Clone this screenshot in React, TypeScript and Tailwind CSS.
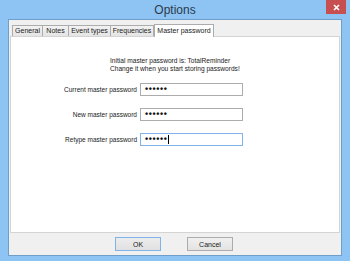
export default function App() {
  const rows = [
    { label: "Current master password", value: "••••••", focused: false },
    { label: "New master password", value: "••••••", focused: false },
    { label: "Retype master password", value: "••••••", focused: true },
  ];
  const tabs = [
    { name: "General", w: "w-[31px]" },
    { name: "Notes", w: "w-[27px]" },
    { name: "Event types", w: "w-[43px]" },
    { name: "Frequencies", w: "w-[44px]" },
  ];

  return (
    <div
      className="w-[350px] h-[261px] bg-[#8dc4f4] flex flex-col px-[8px] pb-[5px] overflow-hidden"
      style={{ fontFamily: '"Liberation Sans", Arial, sans-serif' }}
    >
      {/* Title bar */}
      <div className="h-[19px] relative flex items-center justify-center">
        <span className="text-[12px] text-[#2d3a4a] leading-none">Options</span>
        <button className="absolute right-[-4px] top-0 w-[20px] h-[14px] bg-[#c74f4f] flex items-center justify-center">
          <svg width="7" height="7" viewBox="0 0 7 7">
            <path d="M1 1L6 6M6 1L1 6" stroke="white" strokeWidth="1.6" />
          </svg>
        </button>
      </div>

      {/* Client area */}
      <div className="flex-1 bg-[#f0f0f0] border border-[#6f9fc9] flex flex-col px-[1px] pt-[3px]">
        {/* Tabs */}
        <div className="flex items-end px-[2px] h-[13px] relative z-10">
          {tabs.map((t) => (
            <div
              key={t.name}
              className={
                t.w +
                " h-[11px] border border-[#acacac] border-b-0 -mr-px bg-gradient-to-b from-[#f2f2f2] to-[#e5e5e5] text-[7px] leading-[10px] text-center text-[#1a1a1a] whitespace-nowrap"
              }
            >
              {t.name}
            </div>
          ))}
          <div className="w-[60px] h-[13px] border border-[#acacac] border-b-0 bg-white text-[7px] leading-[11px] text-center text-[#1a1a1a] -mb-px ml-[1px] whitespace-nowrap">
            Master password
          </div>
        </div>

        {/* Panel */}
        <div className="h-[197px] bg-white border border-[#d4d4d4] flex flex-col pt-[20px]">
          <div className="ml-[99px] text-[6.6px] leading-[8px] text-[#1a1a1a]">
            <div>Initial master password is: TotalReminder</div>
            <div>Change it when you start storing passwords!</div>
          </div>
          <div className="flex flex-col gap-[12px] mt-[10px]">
            {rows.map((r) => (
              <div key={r.label} className="flex items-center gap-[3px]">
                <div className="w-[126px] text-right text-[6.5px] text-[#1a1a1a]">{r.label}</div>
                <div
                  className={
                    "w-[103px] h-[13px] bg-white border flex items-center px-[4px] " +
                    (r.focused ? "border-[#7eb4ea]" : "border-[#acacac]")
                  }
                >
                  <span className="text-[9px] leading-none tracking-[0.6px] font-bold text-[#111]">{r.value}</span>
                  {r.focused && <span className="w-px h-[9px] bg-black" />}
                </div>
              </div>
            ))}
          </div>
        </div>

        {/* Buttons */}
        <div className="flex-1 flex items-center justify-center gap-[26px] pr-[2px]">
          <button className="w-[46px] h-[14px] border border-[#7eb4ea] bg-gradient-to-b from-[#ececec] to-[#e1e1e1] text-[7px] text-[#1a1a1a] leading-none">
            OK
          </button>
          <button className="w-[46px] h-[14px] border border-[#acacac] bg-gradient-to-b from-[#f0f0f0] to-[#e3e3e3] text-[7px] text-[#1a1a1a] leading-none">
            Cancel
          </button>
        </div>
      </div>
    </div>
  );
}
